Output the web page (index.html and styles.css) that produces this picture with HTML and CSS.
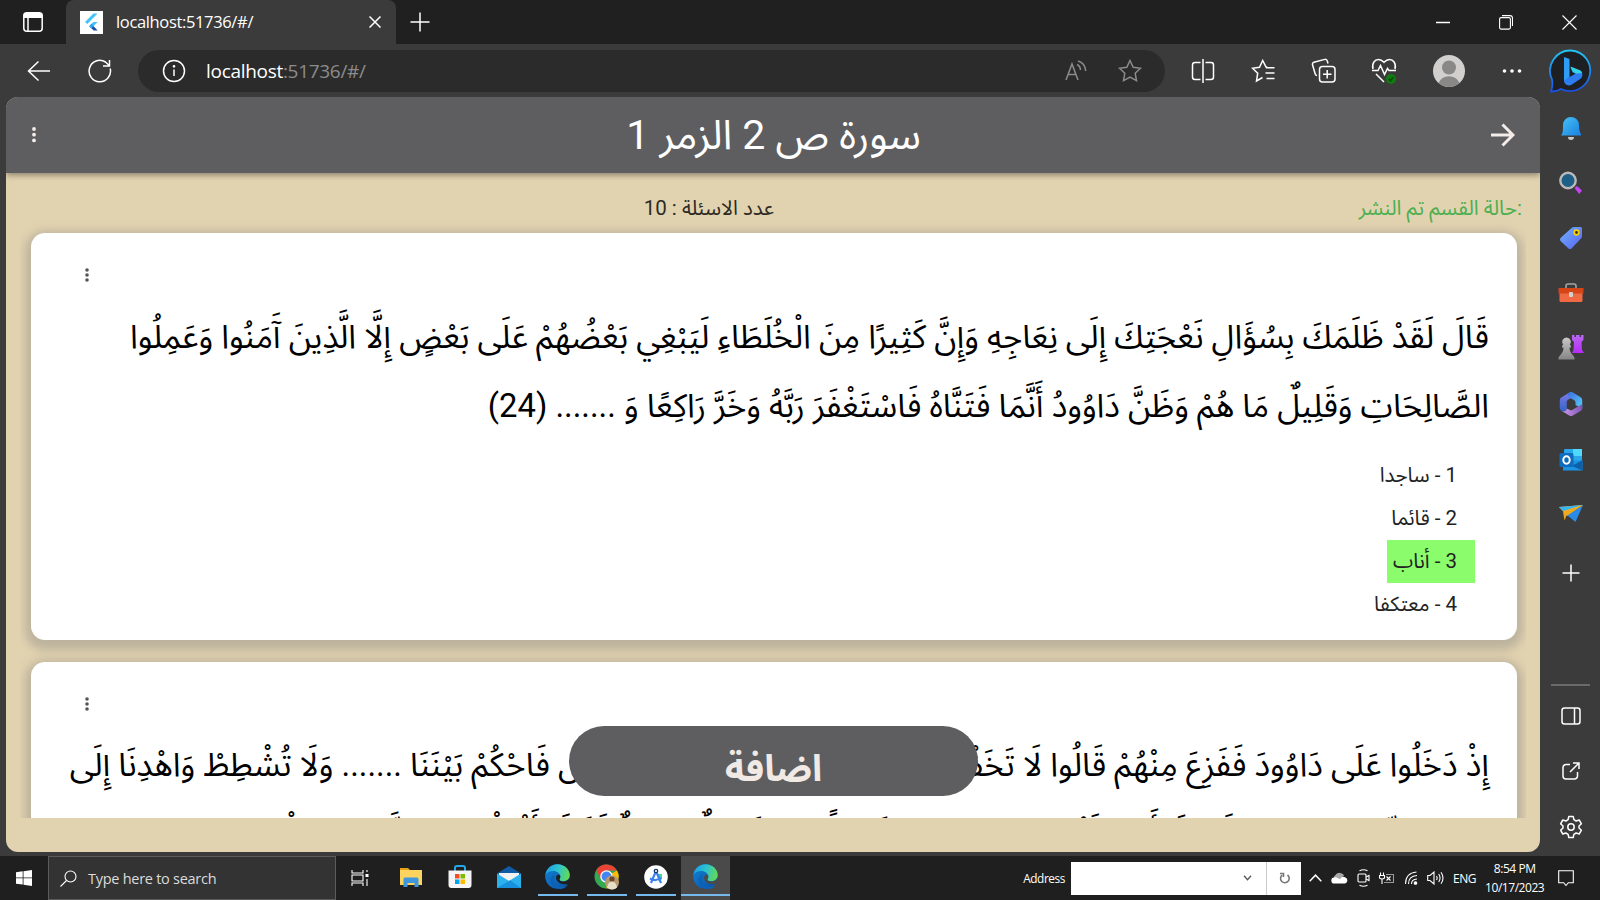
FILE: index.html
```html
<!DOCTYPE html>
<html lang="ar">
<head>
<meta charset="utf-8">
<title>localhost:51736/#/</title>
<link rel="stylesheet" href="styles.css">
</head>
<body>
<svg width="0" height="0" class="defs">
  <defs>
    <linearGradient id="gBlue" x1="0" y1="0" x2="1" y2="1"><stop offset="0" stop-color="#45c4f8"/><stop offset="1" stop-color="#1b7fe0"/></linearGradient>
    <linearGradient id="gBing" x1="0" y1="0" x2="0" y2="1"><stop offset="0" stop-color="#22c4f4"/><stop offset="1" stop-color="#1b4fe0"/></linearGradient>
    <linearGradient id="gTag" x1="0" y1="0" x2="1" y2="1"><stop offset="0" stop-color="#6fb4fb"/><stop offset="1" stop-color="#5a62f2"/></linearGradient>
    <linearGradient id="gEdge" x1="0" y1="0.2" x2="1" y2="0.4"><stop offset="0" stop-color="#1b9de2"/><stop offset=".5" stop-color="#2cc3d2"/><stop offset="1" stop-color="#62d957"/></linearGradient>
    <linearGradient id="gEdge2" x1="0" y1="0" x2="1" y2="1"><stop offset="0" stop-color="#1383d8"/><stop offset="1" stop-color="#0c4f9e"/></linearGradient>
    <linearGradient id="gRook" x1="0" y1="0" x2="0" y2="1"><stop offset="0" stop-color="#b968f0"/><stop offset="1" stop-color="#b62cf6"/></linearGradient>
    <linearGradient id="gPawn" x1="0" y1="0" x2="0" y2="1"><stop offset="0" stop-color="#c8c8c8"/><stop offset="1" stop-color="#858585"/></linearGradient>
    <linearGradient id="gHexA" x1="0" y1="0" x2="0" y2="1"><stop offset="0" stop-color="#7f7be8"/><stop offset="1" stop-color="#2f63c8"/></linearGradient>
    <linearGradient id="gHexB" x1="0" y1="0" x2="1" y2="1"><stop offset="0" stop-color="#3c6be0"/><stop offset="1" stop-color="#58d0f8"/></linearGradient>
    <linearGradient id="gHexC" x1="0" y1="0" x2="1" y2="0"><stop offset="0" stop-color="#d29ae8"/><stop offset="1" stop-color="#7d55b8"/></linearGradient>
    <symbol id="edge" viewBox="0 0 24 24">
      <circle cx="12" cy="12" r="11.800" fill="url(#gEdge2)"/>
      <path d="M.4 10.500C1.400 4.200 6.100.2 12 .2c6.800 0 11.800 4.900 11.800 10.400 0 3.500-2.800 6-6.200 6-2.600 0-4-1-3.700-1.700.5-.8.8-1.600.8-2.700 0-3.100-3-5.500-6.900-5.500-3.500 0-6 1.600-7.400 3.800z" fill="url(#gEdge)"/>
      <path d="M9.300 10.300c-2.800 5.200.4 11 6 11.600 3 .2 5.300-.9 7.100-2.500-2.700 5-9.400 5.900-13.600 2.700-4.500-3.300-4.700-10 .5-11.800z" fill="#0b62b8"/>
      <path class="edge-gap" d="M14.700 12.200c0 1.300-.9 2-.8 2.800.2 1 1.800 1.700 4 1.700 2.300 0 4.300-.9 5.600-2.700.6 2-.2 4-1.500 5-1 .4-3 .7-5 .3-4.500-.9-7.200-4.300-6.200-7.300.8-2.200 3.900-2.300 3.900.2z"/>
    </symbol>
  </defs>
</svg>

<div class="tabs">
  <div class="tabs-side"><svg width="20" height="20" viewBox="0 0 20 20" class="ln"><rect x=".8" y=".8" width="18.400" height="18.400" rx="3"/><path d="M5 5v14"/><path d="M2.500 1h15a2 2 0 0 1 2 2v3H.5V3a2 2 0 0 1 2-2z" fill="#fff" stroke="none"/></svg></div>
  <div class="tab">
    <svg width="23" height="23" viewBox="0 0 23 23"><path fill="#fff" d="M0 0h23v23H0z"/><path d="M13.500 2.500h4L7.300 13 5 11z" fill="#40c4ff"/><path d="M13.500 11h4.200l-4 4-3-1.800z" fill="#40c4ff"/><path d="m9.300 15.200 2.200-2.200 6.200 6.500h-4z" fill="#1a4fa8"/><path d="m9.300 15.200 2.100-2.100 2.200 2.200-2.100 2.200z" fill="#29a5ee"/></svg>
    <span class="tab-name">localhost:51736/#/</span>
    <svg width="12" height="12" viewBox="0 0 12 12" class="ln"><path d="m.5.500 11 11m0-11-11 11"/></svg>
  </div>
  <svg class="new-tab ln" width="20" height="20" viewBox="0 0 20 20"><path d="M10 .5v19M.5 10h19"/></svg>
  <div class="win">
    <svg width="14" height="14" class="ln"><path d="M0 7.500h14"/></svg>
    <svg width="14" height="15" viewBox="0 0 14 15" class="ln thin"><rect x=".6" y="2.600" width="10.800" height="11.500" rx="1.500"/><path d="M3 .6h8a2.500 2.500 0 0 1 2.500 2.500V11"/></svg>
    <svg width="15" height="15" viewBox="0 0 15 15" class="ln thin"><path d="m.5.500 14 14m0-14-14 14"/></svg>
  </div>
</div>

<div class="bar">
  <div class="nav">
    <svg width="24" height="22" viewBox="0 0 24 22" class="ln"><path d="M23 11H1.500M11.500 1.500 1.500 11l10 9.500"/></svg>
    <svg width="24" height="24" viewBox="0 0 24 24" class="ln"><path d="M22.200 9.500A10.700 10.700 0 1 1 17.500 3l4 3.800M21.500 1v6H15"/></svg>
  </div>
  <div class="address">
    <svg width="24" height="24" viewBox="0 0 24 24" class="ln"><circle cx="12" cy="12" r="10.500"/><path d="M12 10.500V17" /><circle cx="12" cy="7.300" r=".6" fill="#fff"/></svg>
    <span class="url">localhost<i>:51736/#/</i></span>
    <svg width="22" height="22" viewBox="0 0 22 22" class="ln dim"><path d="m1 20 6-16 6 16M3 14.500h8M12 4.500c2.400 1 3.300 2.800 3.500 5.500M13 1c4.800 1.400 7.300 4.500 7.700 10"/></svg>
    <svg width="24" height="24" viewBox="0 0 24 24" class="ln dim"><path d="m12 1.500 3.200 6.700 7.300 1-5.300 5.100 1.300 7.400L12 18.200l-6.500 3.500 1.300-7.400L1.500 9.200l7.300-1z"/></svg>
  </div>
  <div class="tools">
    <svg width="24" height="24" viewBox="0 0 24 24" class="ln"><path d="M9.500 3.500H4A2.500 2.500 0 0 0 1.500 6v12A2.500 2.500 0 0 0 4 20.500h5.500M14.500 3.500H20A2.500 2.500 0 0 1 22.500 6v12a2.500 2.500 0 0 1-2.500 2.500h-5.500M12 0v24"/></svg>
    <svg width="24" height="24" viewBox="0 0 24 24" class="ln"><path d="M16.200 8H15L11.700 1.500 8.500 8.200l-7 1 5.200 5L5.500 22l6-3.500M15 8.800h8.500M14.500 14h9M15.500 19.500h8"/></svg>
    <svg width="25" height="25" viewBox="0 0 25 25" class="ln"><rect x="8.500" y="8.500" width="15.500" height="15.500" rx="3"/><path d="M16.200 12v8.500M12 16.200h8.500M17 5.500l-.8-2.700a2 2 0 0 0-2.500-1.400L2.900 4.300a2 2 0 0 0-1.400 2.500l2.800 9.400a2 2 0 0 0 1.800 1.300"/></svg>
    <svg width="26" height="26" viewBox="0 0 26 26" class="ln"><path d="M2 11C.5 5 4 1.500 7.500 1.500c2.500 0 4 1.200 5.500 2.800 1.500-1.600 3-2.800 5.500-2.800C22 1.500 25.500 5 24 11M1 12.500h6l2.500-5 4 9 3-6 1.500 2h7M5 16l8 8"/><circle cx="20" cy="21" r="5" fill="#107c10" stroke="none"/><path d="m17.800 21 1.600 1.800 2.800-3.600" stroke="#064b06"/></svg>
    <svg width="32" height="32" viewBox="0 0 32 32"><circle cx="16" cy="16" r="16" fill="#d2d0ce"/><circle cx="16" cy="12.500" r="7" fill="#8a8886"/><path d="M5.500 28a11.500 11.500 0 0 1 21 0A16 16 0 0 1 5.500 28z" fill="#8a8886"/></svg>
    <svg width="20" height="6" viewBox="0 0 20 6" fill="#fff"><circle cx="2.500" cy="3" r="1.800"/><circle cx="10" cy="3" r="1.800"/><circle cx="17.500" cy="3" r="1.800"/></svg>
    <svg width="44" height="44" viewBox="0 0 44 44"><path d="M22 1.500A20.300 20.300 0 1 1 12 40c-3 1.800-6 2.700-10 2.500 1.500-4 2-7 1-12A20.300 20.300 0 0 1 22 1.500z" fill="#1d1f22" stroke="url(#gBing)" stroke-width="1.800"/><path d="m15 8 5.500 2v18L15 33z" fill="#2e9df5"/><path d="M15 31.500 20.500 28l6-3.300-3-1.400-2-5 9.500 3.500c3 1.500 3.300 5.500.5 8l-9 6c-4 2-7.500-1-7.500-4.300z" fill="#2b7df0"/><path d="m21.500 17.500 2 5 3.500 2 6-.2c-.2-1.600-1-2.500-2-3z" fill="#34d3e8"/></svg>
  </div>
</div>

<div class="main">
  <div class="page">
    <div class="appbar">
      <svg width="4" height="16" viewBox="0 0 4 16" fill="#f4ece8"><circle cx="2" cy="2" r="1.900"/><circle cx="2" cy="7.700" r="1.900"/><circle cx="2" cy="13.400" r="1.900"/></svg>
      <h1 dir="rtl">سورة ص 2 الزمر 1</h1>
      <svg width="24" height="24" viewBox="0 0 24 24" fill="none" stroke="#f4ece8" stroke-width="3"><path d="M0 12h22M11.500 1.500 22 12 11.500 22.500"/></svg>
    </div>
    <div class="summary">
      <span class="count" dir="rtl">عدد الاسئلة : 10</span>
      <span class="status" dir="rtl">:حالة القسم تم النشر</span>
    </div>
    <div class="list">
      <div class="card card-first">
        <svg class="more" width="4" height="14" viewBox="0 0 4 14" fill="#555"><circle cx="2" cy="2" r="1.800"/><circle cx="2" cy="7" r="1.800"/><circle cx="2" cy="12" r="1.800"/></svg>
        <div class="verse" dir="rtl">
          <div>قَالَ لَقَدْ ظَلَمَكَ بِسُؤَالِ نَعْجَتِكَ إِلَى نِعَاجِهِ وَإِنَّ كَثِيرًا مِنَ الْخُلَطَاءِ لَيَبْغِي بَعْضُهُمْ عَلَى بَعْضٍ إِلَّا الَّذِينَ آَمَنُوا وَعَمِلُوا</div>
          <div>الصَّالِحَاتِ وَقَلِيلٌ مَا هُمْ وَظَنَّ دَاوُودُ أَنَّمَا فَتَنَّاهُ فَاسْتَغْفَرَ رَبَّهُ وَخَرَّ رَاكِعًا وَ ....... (24)</div>
        </div>
        <div class="options" dir="rtl">
          <div class="opt">1 - ساجدا</div>
          <div class="opt">2 - قائما</div>
          <div class="opt right">3 - أناب</div>
          <div class="opt">4 - معتكفا</div>
        </div>
      </div>
      <div class="card">
        <svg class="more" width="4" height="14" viewBox="0 0 4 14" fill="#555"><circle cx="2" cy="2" r="1.800"/><circle cx="2" cy="7" r="1.800"/><circle cx="2" cy="12" r="1.800"/></svg>
        <div class="verse" dir="rtl">
          <div>إِذْ دَخَلُوا عَلَى دَاوُودَ فَفَزِعَ مِنْهُمْ قَالُوا لَا تَخَفْ خَصْمَانِ بَغَى بَعْضُنَا عَلَى بَعْضٍ فَاحْكُمْ بَيْنَنَا ....... وَلَا تُشْطِطْ وَاهْدِنَا إِلَى</div>
          <div>سَوَاءِ الصِّرَاطِ (22) إِنَّ هَذَا أَخِي لَهُ تِسْعٌ وَتِسْعُونَ نَعْجَةً وَلِيَ نَعْجَةٌ وَاحِدَةٌ فَقَالَ أَكْفِلْنِيهَا وَعَزَّنِي فِي الْخِطَابِ</div>
        </div>
      </div>
    </div>
    <div class="add" dir="rtl">اضافة</div>
  </div>

  <div class="side">
    <svg width="24" height="24" viewBox="0 0 24 24"><path d="M3 18c1-2 1-5 1-9a8 8 0 0 1 16 0c0 4 .5 7 2 9v1.500H2z" fill="url(#gBlue)"/><path d="M9 21h6a3 3 0 0 1-6 0z" fill="#c9c9c9"/></svg>
    <svg width="24" height="24" viewBox="0 0 24 24"><path d="m15.500 17 2.500-2 5 4.500-2.800 3.400z" fill="#c742f5"/><circle cx="9" cy="9.500" r="7.700" fill="#1d5f86" stroke="#b9b9b9" stroke-width="2.400"/></svg>
    <svg width="24" height="24" viewBox="0 0 24 24"><path d="M12 2.500Q13 1 15 1h6.500A1.500 1.500 0 0 1 23 2.500V10q0 1.500-1 2.500L12.500 22.500q-1.500 1-3 0L1.500 15q-1-1.500 0-3z" fill="url(#gTag)"/><circle cx="17.500" cy="6.500" r="2.300" fill="#333" stroke="#ffd000" stroke-width="1.700"/></svg>
    <svg width="26" height="22" viewBox="0 0 26 22"><path d="M8 7V5q0-2 2-2h6q2 0 2 2v2" fill="none" stroke="#a5a5a5" stroke-width="1.600"/><rect x="1.500" y="10" width="23" height="11" rx="1.500" fill="#ef6a43"/><path d="M.5 7h25v5.500H.5z" fill="#d64518"/><rect x="11" y="11" width="4" height="5" rx="1" fill="#d0d0d0"/></svg>
    <svg width="26" height="26" viewBox="0 0 26 26"><path d="M14 1h2.500v2H18V1h3.500v2H23V1h2.500v5L23.500 8l.5 8 2 3H14l1.500-3 .5-8-2-2z" fill="url(#gRook)"/><path d="M8.500 3.500a4.500 4.500 0 0 1 3.500 7.200v.8h1v2h-1.500c0 3 1 5.500 4 8.500l1 1.500v2H.5v-2l1-1.500c3-3 4-5.500 4-8.500H4v-2h1v-.8a4.500 4.500 0 0 1 3.500-7.200z" fill="url(#gPawn)"/></svg>
    <svg width="24" height="26" viewBox="0 0 24 26"><path d="M11 1.200 2.500 6.200Q.8 7.200.8 9v8q0 1.800 1.700 2.800l2.200 1.200q3 1 3-3V11q0-1.500 1.300-2.300L14 6V2q-1.500-1.500-3-.8z" fill="url(#gHexA)"/><path d="M11 1.200q1.200-.6 2.400 0l8.300 5q1.500 1 1.500 2.800v8.500L16.500 14v-2.500q0-1.500-1.300-2.300l-4-2.300Q8.500 5 8.500 2.700z" fill="url(#gHexB)"/><path d="M2.500 19.800q4.500 2 5.200-2.300l3.500 1.500q1 .5 2 0l10-6v4.500q0 1.500-1.500 2.500l-8.300 4.700q-1.400.7-2.800 0z" fill="url(#gHexC)"/></svg>
    <svg width="24" height="24" viewBox="0 0 24 24"><rect x="5" y="1" width="18" height="15" rx="1" fill="#28a8ea"/><path d="M14 1h9v7h-9z" fill="#50d9ff"/><path d="M4 12.500h19.500V22.500H4z" fill="#1a93e0"/><path d="M23.500 12 13 18l10.500 4.500z" fill="#0f5ea8"/><rect x=".5" y="5" width="14" height="14" rx="1.500" fill="#0f6cbd"/><ellipse cx="7.500" cy="12" rx="3.200" ry="3.700" fill="none" stroke="#fff" stroke-width="2"/></svg>
    <svg class="plane" width="26" height="20" viewBox="0 0 26 20"><path d="M1 3 25 1 9.500 12z" fill="#f5b325"/><path d="M1 3 25 1 5 7z" fill="#39b6f2"/><path d="M25 1 9.500 11.500 17.500 18z" fill="#2a8ae8"/><path d="m5 7.500 1.500 9 2-5L25 1z" fill="#f2a91d"/></svg>
    <svg class="plus ln" width="18" height="18" viewBox="0 0 18 18"><path d="M9 .5v17M.5 9h17"/></svg>
    <hr>
    <svg width="20" height="18" viewBox="0 0 20 18" class="ln"><rect x="1" y="1" width="18" height="16" rx="2.500"/><path d="M13.500 1v16"/></svg>
    <svg class="ext ln" width="18" height="18" viewBox="0 0 18 18"><path d="M8 2.500H4A3 3 0 0 0 1 5.500V14a3 3 0 0 0 3 3h8.500a3 3 0 0 0 3-3v-4M11 1h6v6M17 1 8 10"/></svg>
    <svg class="gear ln" width="24" height="24" viewBox="0 0 24 24"><circle cx="12" cy="12" r="3.200"/><path stroke-linejoin="round" d="M9.800 1.500h4.400l.7 3.200 2.200 1.300 3.100-1 2.200 3.800-2.400 2.200v2l2.400 2.200-2.200 3.800-3.100-1-2.200 1.300-.7 3.200H9.800l-.7-3.200L6.900 18l-3.100 1-2.200-3.800L4 13v-2L1.600 8.800 3.800 5l3.100 1 2.200-1.300z"/></svg>
  </div>
</div>

<div class="taskbar">
  <div class="start"><svg width="16" height="16" viewBox="0 0 16 16" fill="#fff"><path d="M0 2.300 6.700 1.300v6.200H0zM7.500 1.200 16 0v7.500H7.500zM0 8.300h6.700v6.300L0 13.700zM7.500 8.300H16V16l-8.500-1.200z"/></svg></div>
  <div class="search"><svg width="17" height="17" viewBox="0 0 17 17" class="ln thin"><circle cx="10.500" cy="6.500" r="5.500"/><path d="M6.500 10.500.5 16.500"/></svg><span>Type here to search</span></div>
  <div class="apps">
    <div class="app"><svg width="18" height="16" viewBox="0 0 18 16" class="ln thin"><path d="M1 0v3h11V0M1 16v-3h11v3M1 5h11v6H1zM16 0v2M16 9v7"/><path d="M14.500 4h3v3h-3z" fill="#fff" stroke="none"/></svg></div>
    <div class="app"><svg class="up" width="22" height="20" viewBox="0 0 22 20"><path d="M0 1h8l2 2v4H0z" fill="#e8a317"/><path d="M0 3h22v15H0z" fill="#fbd35e"/><path d="M3.500 20v-8a1.500 1.500 0 0 1 1.500-1.500h12a1.500 1.500 0 0 1 1.500 1.500v8h-4v-4h-7v4z" fill="#3f97dd"/></svg></div>
    <div class="app"><svg class="up" width="24" height="24" viewBox="0 0 24 24"><path d="M7 6V3q0-2 2-2h6q2 0 2 2v3" fill="none" stroke="#22a7e8" stroke-width="2"/><path d="M.5 5.500h23V20a3 3 0 0 1-3 3h-17a3 3 0 0 1-3-3z" fill="#f4f4f4"/><path d="M7 9h4.500v4.500H7z" fill="#f25022"/><path d="M12.500 9H17v4.500h-4.500z" fill="#7fba00"/><path d="M7 14.500h4.500V19H7z" fill="#00a4ef"/><path d="M12.500 14.500H17V19h-4.500z" fill="#ffb900"/></svg></div>
    <div class="app"><svg class="up" width="24" height="22" viewBox="0 0 24 22"><path d="M0 7.500 12 0l12 7.500V22H0z" fill="#0f5ba8"/><path d="M2 7h20v9H2z" fill="#f2f2f2"/><path d="m0 7.500 12 7.500L24 7.500V22H0z" fill="#2bb1ee"/><path d="m0 22 13-7.700L24 22z" fill="#1791de"/></svg></div>
    <div class="app open"><svg class="up" width="25" height="25" fill="#1f1f1f"><use href="#edge"/></svg></div>
    <div class="app open"><svg class="up" width="26" height="26" viewBox="0 0 26 26"><circle cx="12.500" cy="12.500" r="12" fill="#34a853"/><path d="M12.500 12.500 23 6.500a12 12 0 0 1-10.500 18z" fill="#fbbc05"/><path d="M2.200 6.300A12 12 0 0 1 12.500.5a12 12 0 0 1 10.400 6H12.500L7.300 15.500z" fill="#ea4335"/><circle cx="12.500" cy="12.500" r="5.600" fill="#4285f4" stroke="#fff" stroke-width="1.300"/><circle cx="18" cy="18.500" r="7" fill="#b89a6c"/><circle cx="18" cy="15" r="2.600" fill="#6b4630"/><path d="M13 23.500q1-6 5-6t5 6a7 7 0 0 1-10 0z" fill="#e8dfc9"/></svg></div>
    <div class="app open"><svg class="up" width="24" height="24" viewBox="0 0 24 24"><circle cx="12" cy="12" r="11.800" fill="#fff"/><path d="M13 9h5v5l-3 3z" fill="#3ddc84"/><path d="M12 6 7 18M12 6l5 12M6 13.500q6 3.500 11-1" fill="none" stroke="#3b82f0" stroke-width="2.200"/><circle cx="12" cy="6" r="1.700" fill="#fff" stroke="#173a70" stroke-width="1.300"/></svg></div>
    <div class="app open active"><svg class="up" width="25" height="25" fill="#4a4a4a"><use href="#edge"/></svg></div>
  </div>
  <span class="addr-label">Address</span>
  <div class="addr-box">
    <div><svg width="9" height="6" viewBox="0 0 8 6" fill="none" stroke="#555" stroke-width="1.300"><path d="m.5.700 3.500 4 3.500-4"/></svg></div>
    <div class="go"><svg width="11" height="12" viewBox="0 0 11 12" fill="none" stroke="#777" stroke-width="1.600"><path d="M8.500 3a4.300 4.300 0 1 1-5.500.2M1 1.500h3.500V5"/></svg></div>
  </div>
  <div class="tray">
    <svg width="13" height="8" viewBox="0 0 13 8" class="ln"><path d="m.7 7.200 5.800-6 5.800 6"/></svg>
    <svg width="17" height="12" viewBox="0 0 17 12"><path d="M3 8a4 4 0 0 1 1.500-5A5 5 0 0 1 13 3.500L8 8z" fill="#a8a8a8"/><path d="M3.500 11.500a3 3 0 0 1-.3-6q2-.7 3.800.7l2 .8q2-3.500 5.500-1.500a3.200 3.200 0 0 1-.5 6z" fill="#fff"/></svg>
    <svg width="13" height="18" viewBox="0 0 13 18" class="ln thin"><path d="M2.500 1.800q4-2 8 0M2.500 16.200q4 2 8 0"/><rect x="1" y="5" width="8" height="8" rx="1"/><path d="m9 8 3-1.500v5L9 10"/></svg>
    <svg width="16" height="13" viewBox="0 0 16 13" class="ln thin"><path d="M1.500.500v3M4.500.500v3M.5 3.500h5v2.500q-2.500 2-5 0zM3 7v5"/><path d="M7 2.500h7.500v8H5" stroke="#999"/><path d="m7.500 4.500 4 4m0-4-4 4"/></svg>
    <svg width="14" height="14" viewBox="0 0 13 14" class="ln thin"><path d="M1 13Q1 2 12 1M4 13q0-8 8.500-8.500M7 13q0-4.700 5.500-5"/><circle cx="11" cy="12" r="1.300" fill="#fff"/></svg>
    <svg width="17" height="14" viewBox="0 0 17 14" class="ln thin"><path d="M.7 4.500H3L7 1v12L3 9.500H.7zM9.500 5q1.300 2 0 4M11.700 3q2.700 4 0 8M14 1.200q4 5.800 0 11.600"/></svg>
    <span class="lang">ENG</span>
    <span class="clock">8:54 PM<br>10/17/2023</span>
    <svg class="note ln thin" width="16" height="17" viewBox="0 0 16 17"><path d="M.7.700h14.600v12h-5L8 15.500l-2.300-2.800h-5z"/></svg>
  </div>
</div>
</body>
</html>
```
FILE: styles.css
```css
* { box-sizing: border-box; }
body {
  margin: 0;
  width: 1600px;
  height: 900px;
  overflow: hidden;
  display: flex;
  flex-direction: column;
  background: #3b3b3b;
  color: #fff;
  font-family: "Open Sans", "Noto Sans", sans-serif;
}
svg { display: block; flex: none; }
.defs { position: absolute; }
.ln { fill: none; stroke: #fff; stroke-width: 1.5; }
.thin { stroke-width: 1.1; }
.dim { stroke: #8c8c8c; }

/* browser tabs */
.tabs { height: 44px; flex: none; display: flex; align-items: center; background: #202020; }
.tabs-side { width: 66px; padding-left: 23px; }
.tab { width: 330px; height: 44px; padding: 0 15px 0 14px; display: flex; align-items: center; background: #3b3b3b; border-radius: 8px 8px 0 0; }
.tab-name { flex: 1; padding-left: 13px; font-size: 16.5px; letter-spacing: -.35px; line-height: 22px; padding-bottom: 1px; white-space: nowrap; }
.new-tab { margin-left: 14px; }
.win { margin-left: auto; padding-right: 23px; display: flex; align-items: center; gap: 49px; }

/* toolbar */
.bar { height: 53px; flex: none; display: flex; align-items: center; }
.nav { width: 138px; padding-left: 27px; display: flex; align-items: center; gap: 37px; }
.address { width: 1027px; height: 42px; padding: 0 23px 0 24px; display: flex; align-items: center; border-radius: 21px; background: #2b2b2b; }
.url { flex: 1; padding-left: 20px; font-size: 19px; letter-spacing: -.3px; }
.url i { font-style: normal; color: #8c8c8c; }
.address .dim + .dim { margin-left: 31px; }
.tools { flex: 1; display: flex; align-items: center; }
.tools svg { margin-left: 26px; }
.tools svg + svg { margin-left: 36px; }
.tools svg:nth-child(4) { margin-left: 35px; }
.tools svg:nth-child(5) { margin-left: 36px; }
.tools svg:nth-child(6) { margin-left: 37px; }
.tools svg:nth-child(7) { margin-left: 27px; }

/* page */
.main { height: 759px; flex: none; display: flex; }
.page { position: relative; width: 1534px; height: 755px; margin-left: 6px; border-radius: 12px; overflow: hidden; background: #e2d3b0; font-family: Roboto, "Noto Sans Arabic", "Noto Sans", "DejaVu Sans", sans-serif; }
.appbar { position: relative; height: 76px; padding: 0 25px 0 26px; display: flex; align-items: center; justify-content: space-between; background: #5e5e60; box-shadow: 0 2px 6px rgba(0, 0, 0, .4); }
.appbar h1 { margin: 0; padding-left: 20px; font-size: 41px; font-weight: 400; line-height: 76px; color: #fff; white-space: nowrap; }
.summary { height: 60px; padding: 11px 18px 0 0; display: grid; grid-template-columns: 768px 1fr; font-size: 20.5px; white-space: nowrap; color: #2d2a23; line-height: 49px; position: relative; z-index: 1; }
.status { color: #4caf50; }
.count { justify-self: end; }
.list { height: 585px; margin: 0 14px; padding: 0 9px 0 11px; clip-path: inset(-20px 0 0 0); }
.card { height: 406px; margin-bottom: 22px; padding: 35px 28px 0; background: #fff; border-radius: 14px; box-shadow: 0 4px 10px 6px rgba(128, 128, 128, .38); color: #000; }
.card-first { height: 407px; }
.more { margin-left: 26px; }
.verse { margin-top: 20px; font-size: 32.77px; line-height: 69px; white-space: nowrap; }
.card-first .verse { margin-top: 21px; }
.options { margin-top: 13px; padding-right: 14px; display: flex; flex-direction: column; align-items: flex-start; font-size: 20.5px; color: #222; }
.opt { height: 43px; padding: 0 18px 0 6px; line-height: 43px; }
.right { background: #8bfc6c; }
.add { position: absolute; left: 563px; top: 629px; width: 409px; height: 70px; border-radius: 35px; background: #5e5e60; color: #f1e9e4; font-size: 37px; font-weight: 700; line-height: 86px; text-align: center; }

/* sidebar */
.side { width: 60px; height: 755px; display: flex; flex-direction: column; align-items: center; padding: 19px 0 13px 1px; }
.side svg + svg { margin-top: 31px; }
.side .plane.plane { margin-top: 32px; }
.side .plus.plus.plus { margin-top: 40px; }
.side .ext.ext { margin-top: 37px; }
.side .gear.gear { margin-top: 35px; }
.side hr { width: 39px; height: 2px; margin: auto 0 21px; border: 0; background: #6a6a6a; }

/* taskbar */
.taskbar { height: 44px; flex: none; display: flex; align-items: center; background: #1f1f1f; }
.start { width: 48px; padding-left: 16px; }
.search { width: 288px; height: 44px; display: flex; align-items: center; padding-left: 11px; gap: 11px; background: #333; border: 1px solid #5c5c5c; color: #dcdcdc; font-size: 14.5px; letter-spacing: -.27px; }
.apps { display: flex; margin-left: -1px; }
.app { width: 49.1px; height: 44px; display: flex; align-items: center; justify-content: center; }
.app + .app { transform: translateX(2px); }
.up { margin-bottom: 3px; }
.open { background: linear-gradient(#76b9ed, #76b9ed) center bottom 4px / 40px 2px no-repeat; }
.active { background: linear-gradient(#76b9ed, #76b9ed) center bottom 4px / 49px 2px no-repeat, #4a4a4a; }
.addr-label { margin-left: auto; font-size: 11.8px; letter-spacing: -.4px; }
.addr-box { width: 230px; height: 33px; margin-left: 6px; display: flex; background: #fff; }
.addr-box div { flex: 1; display: flex; align-items: center; justify-content: flex-end; padding-right: 14px; }
.addr-box .go { flex: 0 0 35px; padding-right: 11px; border-left: 1px solid #ccc; }
.tray { width: 299px; padding-left: 8px; display: flex; align-items: center; gap: 9px; font-size: 12px; letter-spacing: -.45px; }
.clock { line-height: 19px; text-align: center; }
.note { margin-left: 5px; }
```
